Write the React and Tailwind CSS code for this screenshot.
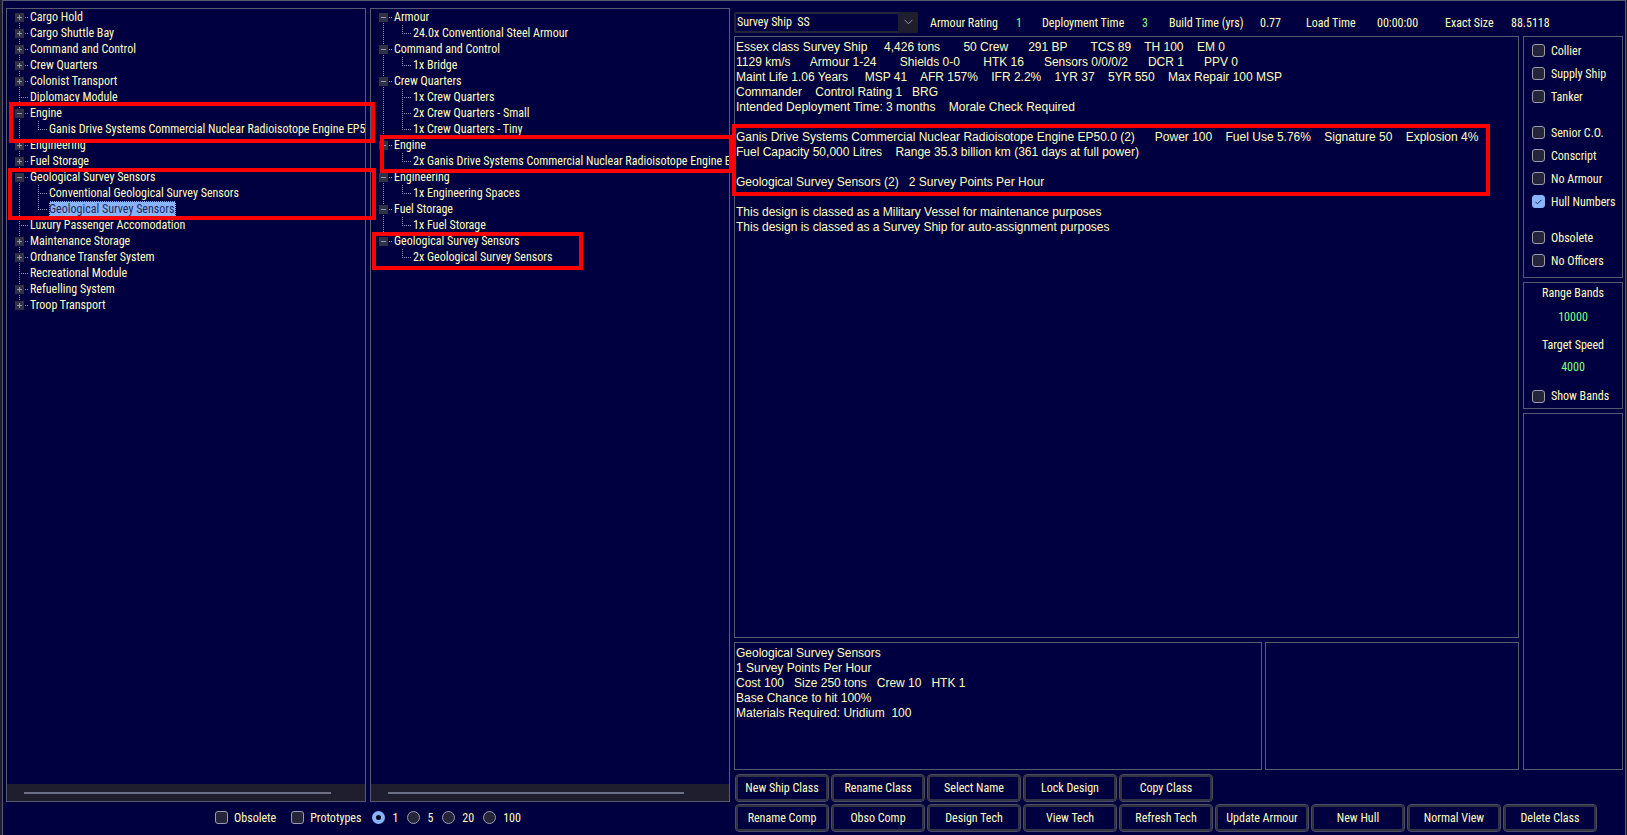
import React from "react";

const available = [
  { name: "Cargo Hold", state: "closed" },
  { name: "Cargo Shuttle Bay", state: "closed" },
  { name: "Command and Control", state: "closed" },
  { name: "Crew Quarters", state: "closed" },
  { name: "Colonist Transport", state: "closed" },
  { name: "Diplomacy Module" },
  {
    name: "Engine",
    state: "open",
    children: ["Ganis Drive Systems Commercial Nuclear Radioisotope Engine EP50.0"],
  },
  { name: "Engineering", state: "closed" },
  { name: "Fuel Storage", state: "closed" },
  {
    name: "Geological Survey Sensors",
    state: "open",
    children: ["Conventional Geological Survey Sensors", "Geological Survey Sensors"],
    selected: "Geological Survey Sensors",
  },
  { name: "Luxury Passenger Accomodation" },
  { name: "Maintenance Storage", state: "closed" },
  { name: "Ordnance Transfer System", state: "closed" },
  { name: "Recreational Module" },
  { name: "Refuelling System", state: "closed" },
  { name: "Troop Transport", state: "closed" },
];

const installed = [
  { name: "Armour", state: "open", children: ["24.0x Conventional Steel Armour"] },
  { name: "Command and Control", state: "open", children: ["1x Bridge"] },
  {
    name: "Crew Quarters",
    state: "open",
    children: ["1x Crew Quarters", "2x Crew Quarters - Small", "1x Crew Quarters - Tiny"],
  },
  {
    name: "Engine",
    state: "open",
    children: ["2x Ganis Drive Systems Commercial Nuclear Radioisotope Engine EP50.0"],
  },
  { name: "Engineering", state: "open", children: ["1x Engineering Spaces"] },
  { name: "Fuel Storage", state: "open", children: ["1x Fuel Storage"] },
  { name: "Geological Survey Sensors", state: "open", children: ["2x Geological Survey Sensors"] },
];

const summary = [
  "Essex class Survey Ship     4,426 tons       50 Crew      291 BP       TCS 89    TH 100    EM 0",
  "1129 km/s      Armour 1-24       Shields 0-0       HTK 16      Sensors 0/0/0/2      DCR 1      PPV 0",
  "Maint Life 1.06 Years     MSP 41    AFR 157%    IFR 2.2%    1YR 37    5YR 550    Max Repair 100 MSP",
  "Commander    Control Rating 1   BRG",
  "Intended Deployment Time: 3 months    Morale Check Required",
  "",
  "Ganis Drive Systems Commercial Nuclear Radioisotope Engine EP50.0 (2)      Power 100    Fuel Use 5.76%    Signature 50    Explosion 4%",
  "Fuel Capacity 50,000 Litres    Range 35.3 billion km (361 days at full power)",
  "",
  "Geological Survey Sensors (2)   2 Survey Points Per Hour",
  "",
  "This design is classed as a Military Vessel for maintenance purposes",
  "This design is classed as a Survey Ship for auto-assignment purposes",
];

const component = [
  "Geological Survey Sensors",
  "1 Survey Points Per Hour",
  "Cost 100   Size 250 tons   Crew 10   HTK 1",
  "Base Chance to hit 100%",
  "Materials Required: Uridium  100",
];

const flagGroups = [
  ["Collier", "Supply Ship", "Tanker"],
  ["Senior C.O.", "Conscript", "No Armour", "Hull Numbers"],
  ["Obsolete", "No Officers"],
];

const buttonRows = [
  ["New Ship Class", "Rename Class", "Select Name", "Lock Design", "Copy Class"],
  [
    "Rename Comp",
    "Obso Comp",
    "Design Tech",
    "View Tech",
    "Refresh Tech",
    "Update Armour",
    "New Hull",
    "Normal View",
    "Delete Class",
  ],
];

const line = { stroke: "#8a8ca8", strokeWidth: 1, strokeDasharray: "1 1" };

function RootGlyph({ state, first, last }) {
  return (
    <svg width="16" height="16" className="block shrink-0" shapeRendering="crispEdges" aria-hidden="true">
      {!first && <line x1="5.5" y1="0" x2="5.5" y2="8" {...line} />}
      {!last && <line x1="5.5" y1="8" x2="5.5" y2="16" {...line} />}
      <line x1="5" y1="8.5" x2="14" y2="8.5" {...line} />
      {state && (
        <>
          <rect x="1" y="4" width="9" height="9" fill="#313244" />
          <line x1="3" y1="8.5" x2="8" y2="8.5" stroke="#9496b0" />
          {state === "closed" && <line x1="5.5" y1="6" x2="5.5" y2="11" stroke="#9496b0" />}
        </>
      )}
    </svg>
  );
}

function ChildGlyph({ rootEnds, last }) {
  return (
    <svg width="35" height="16" className="block shrink-0" shapeRendering="crispEdges" aria-hidden="true">
      {!rootEnds && <line x1="5.5" y1="0" x2="5.5" y2="16" {...line} />}
      <line x1="24.5" y1="0" x2="24.5" y2={last ? 8 : 16} {...line} />
      <line x1="24" y1="8.5" x2="33" y2="8.5" {...line} />
    </svg>
  );
}

function Tree({ label, nodes }) {
  return (
    <ul aria-label={label} className="min-h-0 flex-1 overflow-hidden pl-[7px]">
      {nodes.map((node, i) => (
        <li key={node.name}>
          <div className="flex h-4 items-center whitespace-nowrap">
            {node.state ? (
              <button type="button" aria-label={node.name} aria-expanded={node.state === "open"}>
                <RootGlyph state={node.state} first={i === 0} last={i === nodes.length - 1} />
              </button>
            ) : (
              <RootGlyph />
            )}
            <span>{node.name}</span>
          </div>
          {node.children && (
            <ul>
              {node.children.map((child, j) => (
                <li key={child} className="flex h-4 items-center whitespace-nowrap">
                  <ChildGlyph rootEnds={i === nodes.length - 1} last={j === node.children.length - 1} />
                  {child === node.selected ? (
                    <span className="bg-[#89b4fa] pr-[2px] text-[#1e2a5e] outline-1 -outline-offset-1 outline-dotted outline-[#000040]">
                      {child}
                    </span>
                  ) : (
                    <span>{child}</span>
                  )}
                </li>
              ))}
            </ul>
          )}
        </li>
      ))}
    </ul>
  );
}

function Mark({ className }) {
  return <div aria-hidden="true" className={"pointer-events-none absolute z-10 border-4 border-[#ff0000] " + className} />;
}

function TreePanel({ label, nodes, thumbEnd, children }) {
  return (
    <section className="relative flex min-w-0 flex-col border border-[#585b70]">
      <Tree label={label} nodes={nodes} />
      <div className={"flex h-[17px] items-center bg-[#1e1e2e] pl-[17px] " + thumbEnd}>
        <div className="h-[2px] w-full bg-[#6c7086]" />
      </div>
      {children}
    </section>
  );
}

function Check({ label, defaultChecked, className = "" }) {
  return (
    <label className={"flex items-center gap-[6px] whitespace-nowrap " + className}>
      <span className="grid">
        <input
          type="checkbox"
          defaultChecked={defaultChecked}
          className="peer col-start-1 row-start-1 size-[13px] appearance-none rounded-[3px] border border-[#9b9cab] bg-[#25253a] checked:border-[#89b4fa] checked:bg-[#89b4fa]"
        />
        <svg
          viewBox="0 0 13 13"
          className="pointer-events-none invisible col-start-1 row-start-1 size-[13px] peer-checked:visible"
          aria-hidden="true"
        >
          <path d="M3.5 6.8 5.5 8.8 9.5 4.8" fill="none" stroke="#1e2a5e" strokeWidth="1" />
        </svg>
      </span>
      {label}
    </label>
  );
}

function Radio({ label, defaultChecked }) {
  return (
    <label className="flex items-center gap-[7px]">
      <input
        type="radio"
        name="amount"
        defaultChecked={defaultChecked}
        className="size-[13px] appearance-none rounded-full border border-[#9b9cab] bg-[#25253a] checked:border-4 checked:border-[#89b4fa] checked:bg-[#0a0a18]"
      />
      {label}
    </label>
  );
}

function Stat({ label, labelWidth, value, valueWidth, editable }) {
  const id = label.replace(/\W/g, "");
  return (
    <div className="flex items-center whitespace-nowrap">
      <label htmlFor={id} className={labelWidth}>
        {label}
      </label>
      {editable ? (
        <input id={id} defaultValue={value} className={"bg-transparent text-[#80ff80] outline-none " + valueWidth} />
      ) : (
        <output id={id} className={valueWidth}>
          {value}
        </output>
      )}
    </div>
  );
}

function Report({ lines }) {
  return (
    <div className="pt-[3px] pl-px font-['Liberation_Sans',Arial,sans-serif] text-[12px] leading-[15px] whitespace-pre">
      {lines.map((text, i) => (
        <p key={i} className="h-[15px]">
          {text}
        </p>
      ))}
    </div>
  );
}

export default function App() {
  return (
    <div className="flex min-h-screen bg-[#1e1e2e] pr-px pl-[2px] font-['Roboto_Condensed',Roboto,'Liberation_Sans',sans-serif] text-[12px] leading-4 text-[#ffffc0]">
      <main className="grid flex-1 grid-cols-[724fr_889fr] gap-1 border-x border-t border-[#585b70] bg-[#000040] pr-[2px] pl-[3px]">
        <div className="flex min-w-0 flex-col pt-[7px]">
          <div className="grid flex-1 grid-cols-2 gap-1">
            <TreePanel label="Available components" nodes={available} thumbEnd="pr-[34px]">
              <Mark className="top-[93px] -right-[10px] left-[2px] h-[41px]" />
              <Mark className="top-[159px] -right-[11px] left-px h-[52px]" />
            </TreePanel>
            <TreePanel label="Installed components" nodes={installed} thumbEnd="pr-[45px]">
              <Mark className="top-[126px] -right-[4px] left-[9px] h-[38px]" />
              <Mark className="top-[223px] left-px h-[38px] w-[211px]" />
            </TreePanel>
          </div>
          <div className="flex h-[33px] items-center justify-center gap-[9px] pb-[2px]">
            <Check label="Obsolete" className="mr-[6px]" />
            <Check label="Prototypes" className="mr-[2px]" />
            <Radio label="1" defaultChecked />
            <Radio label="5" />
            <Radio label="20" />
            <Radio label="100" />
          </div>
        </div>

        <div className="flex min-w-0 flex-col">
          <header className="flex h-[35px] items-center pt-[7px]">
            <div className="grid w-[184px] shrink-0">
              <select
                aria-label="Hull type"
                className="col-start-1 row-start-1 h-[21px] appearance-none rounded-[2px] border-2 border-[#25253a] bg-[#000040] pl-px leading-4"
                defaultValue="SS"
              >
                <option value="SS">Survey Ship&nbsp; SS</option>
              </select>
              <span className="pointer-events-none col-start-1 row-start-1 flex h-[21px] w-5 items-center justify-center justify-self-end rounded-r-[2px] bg-[#1e1e2e]">
                <svg width="9" height="6" viewBox="0 0 9 6" aria-hidden="true">
                  <path d="M.5.8 4.5 4.8 8.5.8" fill="none" stroke="#9496b0" />
                </svg>
              </span>
            </div>
            <div className="flex pt-[2px] pl-3">
              <Stat label="Armour Rating" labelWidth="w-[86px]" value="1" valueWidth="w-[26px]" editable />
              <Stat label="Deployment Time" labelWidth="w-[100px]" value="3" valueWidth="w-[27px]" editable />
              <Stat label="Build Time (yrs)" labelWidth="w-[91px]" value="0.77" valueWidth="w-[46px]" />
              <Stat label="Load Time" labelWidth="w-[71px]" value="00:00:00" valueWidth="w-[68px]" />
              <Stat label="Exact Size" labelWidth="w-[66px]" value="88.5118" valueWidth="w-[60px]" />
            </div>
          </header>

          <div className="grid flex-1 grid-cols-[1fr_100px] gap-1">
            <div className="flex min-w-0 flex-col gap-1">
              <section aria-label="Class summary" className="relative flex-1 border border-[#585b70]">
                <Report lines={summary} />
                <Mark className="top-[87px] -left-[3px] h-[72px] w-[758px]" />
              </section>
              <div className="grid h-32 grid-cols-[528fr_254fr] gap-[3px]">
                <section aria-label="Component details" className="border border-[#585b70]">
                  <Report lines={component} />
                </section>
                <section aria-label="Errors" className="border border-[#585b70]" />
              </div>
            </div>

            <aside className="flex flex-col gap-1">
              <div className="flex h-[242px] flex-col gap-[13px] border border-[#585b70] pt-[2px] pl-2">
                {flagGroups.map((group) => (
                  <div key={group[0]}>
                    {group.map((name) => (
                      <Check key={name} label={name} defaultChecked={name === "Hull Numbers"} className="h-[23px]" />
                    ))}
                  </div>
                ))}
              </div>
              <div className="flex h-[127px] flex-col border border-[#585b70]">
                <label htmlFor="bands" className="h-5 text-center leading-5">
                  Range Bands
                </label>
                <input id="bands" defaultValue="10000" className="h-7 w-full bg-transparent text-center text-[#80ff80] outline-none" />
                <label htmlFor="speed" className="h-7 text-center leading-7">
                  Target Speed
                </label>
                <input id="speed" defaultValue="4000" className="h-4 w-full bg-transparent text-center text-[#80ff80] outline-none" />
                <Check label="Show Bands" className="mt-auto h-6 pl-2" />
              </div>
              <div className="flex-1 border border-[#585b70]" />
            </aside>
          </div>

          <div className="flex flex-col gap-[2px] pt-1 pb-[3px] pl-px">
            {buttonRows.map((row) => (
              <div key={row[0]} className="flex gap-[2px]">
                {row.map((name) => (
                  <button
                    key={name}
                    type="button"
                    className="h-7 w-[94px] rounded-[4px] border border-[#4b4d60] whitespace-nowrap inset-ring-2 inset-ring-[#313244]"
                  >
                    {name}
                  </button>
                ))}
              </div>
            ))}
          </div>
        </div>
      </main>
    </div>
  );
}
